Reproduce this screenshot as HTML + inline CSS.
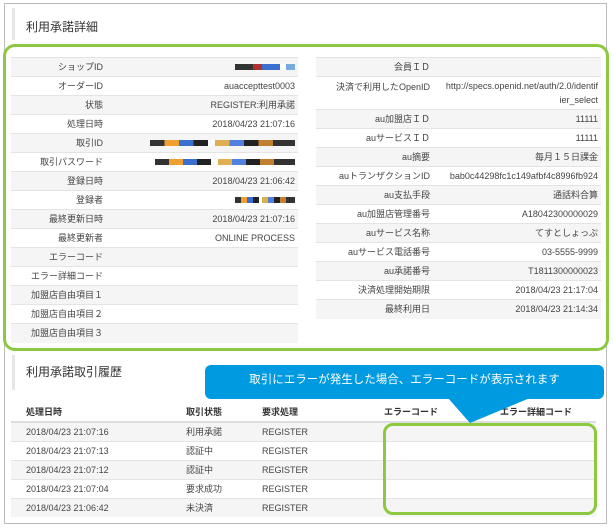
<!DOCTYPE html>
<html><head><meta charset="utf-8"><style>
*{margin:0;padding:0;box-sizing:border-box}
body{width:613px;height:528px;background:#fff;font-family:"Liberation Sans","Noto Sans CJK JP",sans-serif;color:#444;position:relative;overflow:hidden}
.abs{position:absolute}
.frame{left:4px;top:3px;width:603px;height:521px;border:1px solid #bbb}
.bar{width:3px;background:#e6e6e6}
.ttl{font-size:12px;color:#333}
table{border-collapse:collapse;font-size:9px;position:absolute}
td{height:19px;border-top:1px solid #e4e4e4;text-align:right;padding:0 3px;vertical-align:middle;line-height:14px}
tr.g td{background:#f5f5f5}
.hist td{text-align:left;padding-left:0}
.hist th{text-align:left;font-weight:bold;font-size:9px;height:20px;border-bottom:2px solid #ddd;padding:0;color:#333}
.px{display:inline-block;height:6px;background:linear-gradient(90deg,#333 0 10%,#f0a030 10% 20%,#3a6fd0 20% 30%,#222 30% 40%,#fff 40% 45%,#e0b050 45% 55%,#5080e0 55% 65%,#222 65% 75%,#c08030 75% 85%,#333 85%)}
</style></head><body>
<div class="abs frame"></div>
<div class="abs bar" style="left:12px;top:8px;height:32px"></div>
<div class="abs ttl" style="left:26px;top:18px">利用承諾詳細</div>

<table style="left:11px;top:57px;width:287px">
<colgroup><col style="width:95px"><col></colgroup>
<tr class="g"><td>ショップID</td><td><span class="px" style="width:60px;background:linear-gradient(90deg,#333 0 30%,#b03030 30% 45%,#3a6fd0 45% 75%,#fff 75% 85%,#7ad 85%)"></span></td></tr>
<tr><td>オーダーID</td><td>auaccepttest0003</td></tr>
<tr class="g"><td>状態</td><td>REGISTER:利用承諾</td></tr>
<tr><td>処理日時</td><td>2018/04/23 21:07:16</td></tr>
<tr class="g"><td>取引ID</td><td><span class="px" style="width:145px"></span></td></tr>
<tr><td>取引パスワード</td><td><span class="px" style="width:140px"></span></td></tr>
<tr class="g"><td>登録日時</td><td>2018/04/23 21:06:42</td></tr>
<tr><td>登録者</td><td><span class="px" style="width:60px"></span></td></tr>
<tr class="g"><td>最終更新日時</td><td>2018/04/23 21:07:16</td></tr>
<tr><td>最終更新者</td><td>ONLINE PROCESS</td></tr>
<tr class="g"><td>エラーコード</td><td></td></tr>
<tr><td>エラー詳細コード</td><td></td></tr>
<tr class="g"><td>加盟店自由項目１</td><td></td></tr>
<tr><td>加盟店自由項目２</td><td></td></tr>
<tr class="g"><td>加盟店自由項目３</td><td></td></tr>
</table>

<table style="left:316px;top:57px;width:285px">
<colgroup><col style="width:117px"><col></colgroup>
<tr class="g"><td>会員ＩＤ</td><td></td></tr>
<tr><td style="vertical-align:top;padding-top:3px;height:33px">決済で利用したOpenID</td><td style="height:33px">http://specs.openid.net/auth/2.0/identif<br>ier_select</td></tr>
<tr class="g"><td>au加盟店ＩＤ</td><td>11111</td></tr>
<tr><td>auサービスＩＤ</td><td>11111</td></tr>
<tr class="g"><td>au摘要</td><td>毎月１５日課金</td></tr>
<tr><td>auトランザクションID</td><td>bab0c44298fc1c149afbf4c8996fb924</td></tr>
<tr class="g"><td>au支払手段</td><td>通話料合算</td></tr>
<tr><td>au加盟店管理番号</td><td>A18042300000029</td></tr>
<tr class="g"><td>auサービス名称</td><td>てすとしょっぷ</td></tr>
<tr><td>auサービス電話番号</td><td>03-5555-9999</td></tr>
<tr class="g"><td>au承諾番号</td><td>T1811300000023</td></tr>
<tr><td>決済処理開始期限</td><td>2018/04/23 21:17:04</td></tr>
<tr class="g"><td>最終利用日</td><td>2018/04/23 21:14:34</td></tr>
</table>

<div class="abs" style="left:3px;top:44px;width:606px;height:307px;border:3px solid #8cc840;border-radius:12px"></div>

<div class="abs bar" style="left:12px;top:355px;height:35px"></div>
<div class="abs ttl" style="left:26px;top:363px">利用承諾取引履歴</div>

<table class="hist" style="left:11px;top:402px;width:585px">
<colgroup><col style="width:175px"><col style="width:76px"><col style="width:122px"><col style="width:116px"><col></colgroup>
<tr><th style="padding-left:15px">処理日時</th><th>取引状態</th><th>要求処理</th><th>エラーコード</th><th>エラー詳細コード</th></tr>
<tr class="g"><td style="padding-left:15px">2018/04/23 21:07:16</td><td>利用承諾</td><td>REGISTER</td><td></td><td></td></tr>
<tr><td style="padding-left:15px">2018/04/23 21:07:13</td><td>認証中</td><td>REGISTER</td><td></td><td></td></tr>
<tr class="g"><td style="padding-left:15px">2018/04/23 21:07:12</td><td>認証中</td><td>REGISTER</td><td></td><td></td></tr>
<tr><td style="padding-left:15px">2018/04/23 21:07:04</td><td>要求成功</td><td>REGISTER</td><td></td><td></td></tr>
<tr class="g"><td style="padding-left:15px">2018/04/23 21:06:42</td><td>未決済</td><td>REGISTER</td><td></td><td></td></tr>
</table>

<svg class="abs" style="left:0;top:0" width="613" height="528">
<path d="M448 398 L470 423 L530 398 Z" fill="#009ae0"/>
</svg>
<div class="abs" style="left:205px;top:365px;width:399px;height:34px;background:#009ae0;border-radius:6px;color:#fff;font-size:11.5px;text-align:center;line-height:30px">取引にエラーが発生した場合、エラーコードが表示されます</div>
<div class="abs" style="left:383px;top:423px;width:214px;height:92px;border:3px solid #8cc840;border-radius:10px"></div>
</body></html>
